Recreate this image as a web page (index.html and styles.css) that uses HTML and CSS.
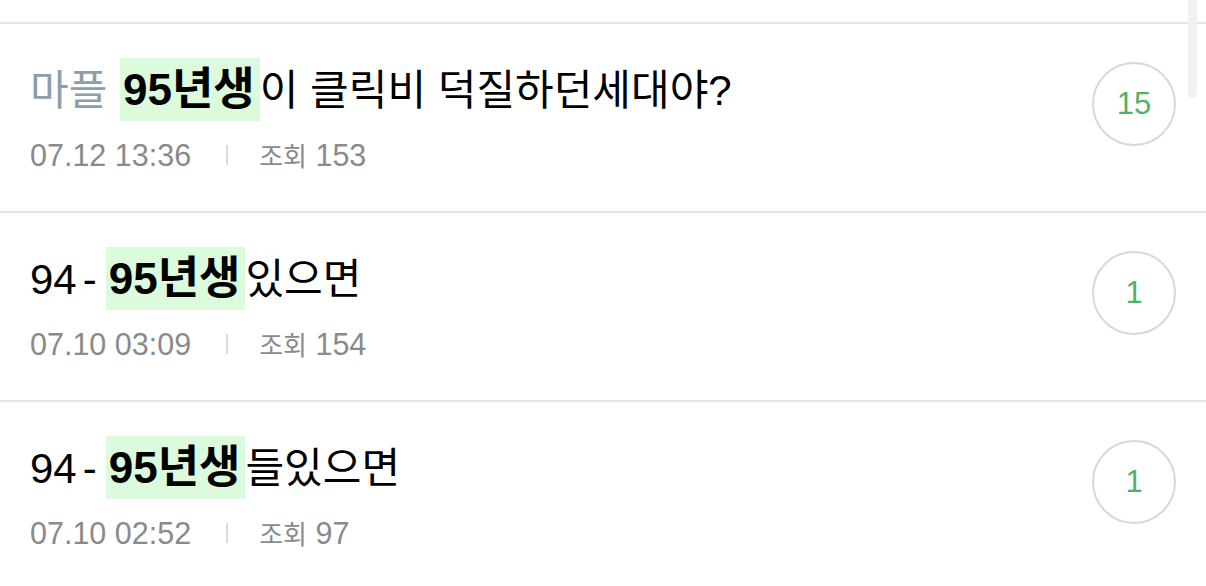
FILE: index.html
```html
<!DOCTYPE html>
<html lang="ko">
<head>
<meta charset="utf-8">
<link rel="stylesheet" href="styles.css">
</head>
<body>
<div class="list">
  <div class="prev"></div>
  <div class="row">
    <div class="main">
      <div class="title"><span class="ko tag">마플</span> <span class="hl"><b>95</b><b class="ko">년생</b></span><span class="ko">이 클릭비 덕질하던세대야</span>?</div>
      <div class="meta"><span>07.12 13:36</span><span class="sep"></span><span class="ko">조회</span> 153</div>
    </div>
    <div class="count">15</div>
  </div>
  <div class="row">
    <div class="main">
      <div class="title">94<span class="dash">-</span><span class="hl"><b>95</b><b class="ko">년생</b></span><span class="ko">있으면</span></div>
      <div class="meta"><span>07.10 03:09</span><span class="sep"></span><span class="ko">조회</span> 154</div>
    </div>
    <div class="count">1</div>
  </div>
  <div class="row">
    <div class="main">
      <div class="title">94<span class="dash">-</span><span class="hl"><b>95</b><b class="ko">년생</b></span><span class="ko">들있으면</span></div>
      <div class="meta"><span>07.10 02:52</span><span class="sep"></span><span class="ko">조회</span> 97</div>
    </div>
    <div class="count">1</div>
  </div>
</div>
<div class="scrollbar"></div>
</body>
</html>
```
FILE: styles.css
```css
html, body {
  margin: 0;
  padding: 0;
  background: #ffffff;
  overflow: hidden;
}
body {
  width: 1206px;
  height: 586px;
  position: relative;
  font-family: "Liberation Sans", "Noto Sans CJK KR", sans-serif;
}
.list {
  display: flex;
  flex-direction: column;
}
.prev {
  height: 22px;
  border-bottom: 2px solid #e4e4e4;
}
.row {
  display: flex;
  align-items: flex-start;
  height: 189px;
  box-sizing: border-box;
  padding: 34px 30px 0 30px;
  border-bottom: 2px solid #e4e4e4;
}
.main {
  flex: 1;
  display: flex;
  flex-direction: column;
}
.title {
  font-size: 42px;
  line-height: 63px;
  height: 63px;
  color: #000;
  white-space: nowrap;
}
.ko {
  font-family: "Noto Sans CJK KR", "Liberation Sans", sans-serif;
  font-size: 42px;
  line-height: 1;
}
.tag {
  color: #8c9eae;
  margin-right: 1px;
}
.dash {
  padding: 0 9px 0 6px;
}
.hl {
  display: inline-block;
  background: #dbfbdc;
  padding: 0 5px 0 3px;
  height: 63px;
}
.hl b {
  font-weight: 700;
  font-size: 44px;
}
.hl b.ko {
  font-size: 45px;
}
.meta {
  margin-top: 14px;
  font-size: 30.5px;
  line-height: 40px;
  color: #8a8a8a;
  display: flex;
  align-items: center;
  white-space: pre;
}
.meta .ko {
  font-size: 26px;
  line-height: 40px;
}
.sep {
  width: 2px;
  height: 20px;
  background: #dcdcdc;
  margin: 0 31px 0 35px;
}
.count {
  width: 80px;
  height: 80px;
  margin-top: 4px;
  border: 2px solid #d8d8d8;
  border-radius: 50%;
  display: flex;
  align-items: center;
  justify-content: center;
  font-size: 31px;
  color: #4fb268;
  flex-shrink: 0;
}
.scrollbar {
  position: absolute;
  left: 1188px;
  top: 0;
  width: 9px;
  height: 98px;
  border-radius: 0 0 5px 5px;
  background: #f1f1f1;
}
```
